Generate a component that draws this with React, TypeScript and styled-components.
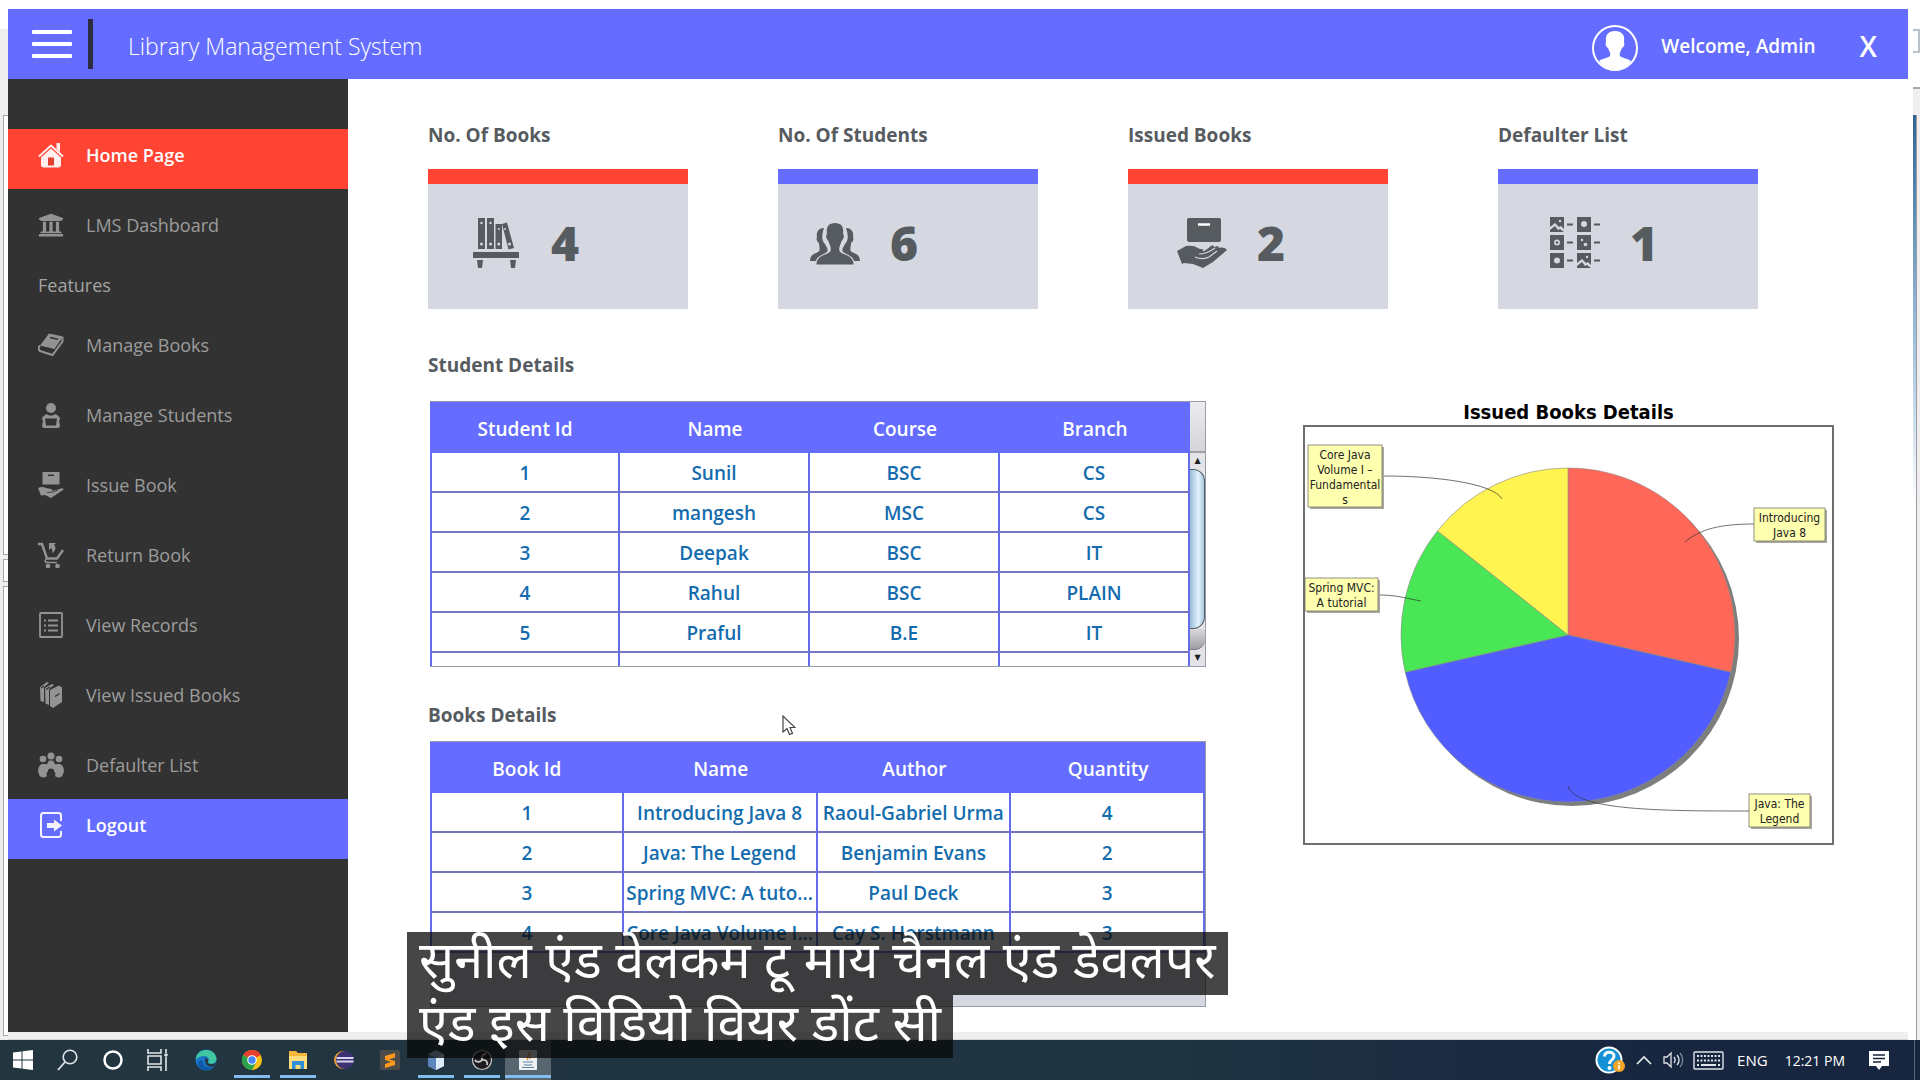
import React from "react";
import styled, { createGlobalStyle } from "styled-components";
import { FaUniversity } from "react-icons/fa";

const GlobalStyle = createGlobalStyle`
  * { box-sizing: border-box; }
  body { margin: 0; background: #fff; font-family: "Open Sans", "Noto Sans", sans-serif; }
  button { font: inherit; border: 0; background: none; padding: 0; color: inherit; cursor: pointer; }
  a { color: inherit; text-decoration: none; }
  h1, h2, p { margin: 0; }
  svg { display: block; }
`;

const blue = "#646dff";
const red = "#ff4433";
const ink = "#565b5f";

const Desktop = styled.div`
  position: relative;
  min-height: 100vh;
  display: flex;
  flex-direction: column;
  overflow: hidden;
`;
const Stage = styled.div`
  flex: 1;
  display: flex;
  padding-top: 9px;
  background: #fff;
`;
const LeftEdge = styled.div`
  width: 8px;
  display: flex;
  flex-direction: column;
  padding-top: 86px;
  background: #eeeeef;
  border-top: 20px solid #fff;
`;
const LeftPane = styled.div<{ $grow: number }>`
  flex: ${(p) => p.$grow};
  margin: 0 0 4px 3px;
  background: #fff;
  border: 1px solid #a5a5aa;
  border-right: 0;
`;
const RightEdge = styled.div`
  width: 12px;
  display: flex;
  flex-direction: column;
  padding: 20px 0 0 5px;
`;
const EdgeBox = styled.div`
  height: 24px;
  border: 2px solid #b9c3c9;
  border-left: 0;
`;
const EdgeBar = styled.div`
  height: 62px;
  background: linear-gradient(#fff 0 34px, #a9a9a9 34px 36px, #efefef 36px);
`;
const EdgeScroll = styled.div`
  flex: 1;
  border-right: 3px solid #efedee;
  background: linear-gradient(90deg, transparent 3px, #9d9da3 3px 4px, transparent 4px),
    linear-gradient(#2f6492, #8fb8d8 200px, #fff 390px);
`;
const Window = styled.div`
  flex: 1;
  min-width: 0;
  display: flex;
  flex-direction: column;
`;
const WindowFoot = styled.div`
  height: 8px;
  background: #efefef;
  border-bottom: 1px solid #d4d4d8;
`;

const Header = styled.header`
  height: 70px;
  display: flex;
  align-items: center;
  padding: 0 31px 0 24px;
  background: ${blue};
  color: #fff;
`;
const MenuButton = styled.button`
  width: 40px;
  height: 28px;
  display: flex;
  flex-direction: column;
  justify-content: space-between;
`;
const MenuLine = styled.span`
  height: 4px;
  width: 100%;
  border-radius: 1px;
  background: #fff;
`;
const Divider = styled.span`
  width: 5px;
  height: 50px;
  margin: 0 35px 0 16px;
  background: #2d2d40;
`;
const AppTitle = styled.h1`
  flex: 1;
  font-size: 23px;
  font-weight: 300;
  line-height: 32px;
  padding-top: 4px;
`;
const Avatar = styled.svg`
  margin-top: 8px;
`;
const Welcome = styled.span`
  margin: 0 44px 0 22px;
  font-size: 19px;
  font-weight: 600;
  line-height: 28px;
  padding-top: 4px;
`;
const CloseButton = styled.button`
  font-size: 28px;
  font-weight: 600;
  line-height: 32px;
  padding-top: 4px;
`;

const Body = styled.div`
  flex: 1;
  display: flex;
`;
const Sidebar = styled.nav`
  width: 340px;
  padding-top: 50px;
  background: #323232;
  display: flex;
  flex-direction: column;
`;
const NavItem = styled.a<{ $tone?: string; $gap?: boolean }>`
  height: 60px;
  display: flex;
  align-items: center;
  gap: 22px;
  padding: 0 30px 8px;
  margin-top: ${(p) => (p.$gap ? 10 : 0)}px;
  background: ${(p) => p.$tone ?? "transparent"};
  color: ${(p) => (p.$tone ? "#fff" : "#9c9c9c")};
  font-size: 18px;
  font-weight: ${(p) => (p.$tone ? 600 : 500)};
`;
const NavIcon = styled.span`
  width: 26px;
  height: 26px;
  opacity: 0.92;
`;
const NavHeading = styled.p`
  height: 60px;
  padding: 0 30px 8px;
  display: flex;
  align-items: center;
  color: #a3a3a3;
  font-size: 18px;
  font-weight: 500;
`;

const Main = styled.main`
  flex: 1;
  min-width: 0;
  padding: 44px 74px 25px 80px;
`;
const Stats = styled.section`
  display: flex;
  gap: 90px;
  margin-right: 76px;
`;
const Stat = styled.div`
  flex: 1;
  &:last-child { margin-left: 20px; }
`;
const SectionTitle = styled.h2`
  font-size: 19px;
  font-weight: 700;
  line-height: 24px;
  color: ${ink};
`;
const StatCard = styled.div<{ $tone: string; $indent: number }>`
  height: 140px;
  margin-top: 22px;
  border-top: 15px solid ${(p) => p.$tone};
  background: #d5d8e0;
  color: ${ink};
  display: flex;
  align-items: center;
  gap: 30px;
  padding-left: ${(p) => p.$indent}px;
  padding-bottom: 8px;
`;
const StatValue = styled.span`
  font-size: 48px;
  font-weight: 800;
  line-height: 56px;
`;

const Lower = styled.div`
  display: grid;
  grid-template-columns: 778fr 531fr;
  gap: 97px;
  margin-top: 44px;
`;
const TableBox = styled.div<{ $top: number }>`
  height: 266px;
  margin: ${(p) => p.$top}px 0 0 2px;
  border: 1px solid #9a9aa8;
  border-left: 0;
  background: #d5d8e0;
  overflow: hidden;
  display: flex;
  align-items: flex-start;
`;
const BookTitle = styled(SectionTitle)`
  margin-top: 36px;
`;
const TableView = styled.div`
  flex: 1;
  min-width: 0;
`;
const Table = styled.table`
  width: 100%;
  table-layout: fixed;
  border-collapse: separate;
  border-spacing: 0;
  text-align: center;
`;
const Th = styled.th`
  height: 51px;
  padding: 3px 0 0;
  background: ${blue};
  color: #fff;
  font-size: 19px;
  font-weight: 600;
`;
const Td = styled.td`
  height: 40px;
  padding: 2px 0 0;
  background: #fff;
  border-right: 2px solid #656cec;
  border-bottom: 2px solid #7476c4;
  color: #146cae;
  font-size: 19px;
  font-weight: 600;
  line-height: 28px;
  white-space: nowrap;
  overflow: hidden;
  &:first-child { border-left: 2px solid #656cec; }
`;
const ScrollTrack = styled.div`
  width: 15px;
  height: 100%;
  display: flex;
  flex-direction: column;
  background: #e4e4e8;
`;
const ScrollCorner = styled.span`
  height: 51px;
  border-bottom: 2px solid #a0a0a6;
  background: linear-gradient(#ececf0, #d5d5d9);
`;
const ScrollStep = styled.button`
  height: 16px;
  font-family: "DejaVu Sans", sans-serif;
  font-size: 8px;
  line-height: 16px;
  color: #222;
`;
const ScrollThumb = styled.span`
  height: 160px;
  border: 1px solid #4e5963;
  border-left: 0;
  border-radius: 0 12px 12px 0;
  background: linear-gradient(90deg, #98bcd8, #e2f2fc 60%, #a9c9e0);
`;
const ScrollRest = styled.span`
  flex: 1;
  border-bottom: 1px solid #77777c;
  border-radius: 0 0 10px 0;
  background: linear-gradient(#d9d9dd, #9d9da3);
`;

const ChartPanel = styled.section`
  padding-top: 46px;
`;
const ChartTitle = styled.h2`
  font-family: "DejaVu Sans Condensed", "DejaVu Sans", sans-serif;
  font-size: 20px;
  font-weight: 700;
  line-height: 26px;
  text-align: center;
  color: #000;
`;
const ChartFrame = styled.div`
  border: 2px solid #6e6e6e;
  background: #fff;
`;
const ChartText = styled.text`
  font-family: "DejaVu Sans Condensed", "DejaVu Sans", sans-serif;
  font-size: 12px;
  text-anchor: middle;
  fill: #222;
`;

const Captions = styled.div`
  position: absolute;
  left: 407px;
  bottom: 22px;
  display: flex;
  flex-direction: column;
  align-items: flex-start;
`;
const Caption = styled.p`
  height: 63px;
  padding: 0 12px;
  background: rgba(8, 8, 8, 0.75);
  color: #fff;
  font-family: "Noto Sans Devanagari", "Noto Sans", sans-serif;
  font-size: 52px;
  line-height: 66px;
  white-space: nowrap;
`;
const Pointer = styled.svg`
  position: absolute;
  left: 782px;
  top: 715px;
`;

const Taskbar = styled.footer`
  height: 40px;
  display: flex;
  justify-content: space-between;
  background: linear-gradient(90deg, #233640, #1f3441 60%, #182740 85%, #17263e);
  color: #fff;
`;
const TaskGroup = styled.div`
  display: flex;
`;
const TaskButton = styled.button<{ $system?: boolean }>`
  width: ${(p) => (p.$system ? 45 : 46)}px;
  height: 40px;
  display: flex;
  align-items: center;
  justify-content: center;
`;
const OpenTaskButton = styled(TaskButton)<{ $active?: boolean }>`
  background: linear-gradient(#83bdf0, #83bdf0) center 35px / ${(p) => (p.$active ? 46 : 36)}px 3px no-repeat
    ${(p) => (p.$active ? "#56656e" : "transparent")};
`;
const TaskApps = styled(TaskGroup)`
  margin-left: 3px;
`;
const Tray = styled.div`
  display: flex;
  align-items: center;
  padding-right: 5px;
  font-size: 15px;
`;
const TrayItem = styled.button<{ $before: number }>`
  margin-left: ${(p) => p.$before}px;
`;
const Clock = styled(TrayItem)`
  font-size: 14px;
`;
const ShowDesktop = styled.button`
  width: 1px;
  height: 40px;
  margin-left: 24px;
  background: #5b6a7c;
`;

type IconProps = { size?: number };
const Glyph = ({ size = 26, children }: IconProps & { children: React.ReactNode }) => (
  <svg width={size} height={size} viewBox="0 0 26 26" fill="currentColor" aria-hidden="true">
    {children}
  </svg>
);

const HomeIcon = () => (
  <Glyph>
    <path d="M1 14.500 13 3.500l12 11" fill="none" stroke="currentColor" strokeWidth="2" />
    <path d="M18.500 1h3.500v9l-3.500-3Z" />
    <path d="M13 6.500 3 15.500V23c0 1.500 1 2.500 2.500 2.500h15c1.500 0 2.500-1 2.500-2.500v-7.500Z" />
    <path d="M10 15.500h6v8h-6Z" fill="#e0402f" />
  </Glyph>
);
const BookIcon = () => (
  <Glyph>
    <path d="M11 1.500 25 4.500 16.500 17 2 13.500Z" />
    <path d="M2 13.500c-2 2-1.500 4.500 0 5.500L14.500 23 24.500 9.500V5" fill="none" stroke="currentColor" strokeWidth="2" />
    <path d="M12 5.500l8 1.700" stroke="#323232" strokeWidth="1.500" />
  </Glyph>
);
const StudentIcon = () => (
  <Glyph>
    <circle cx="13" cy="6" r="5" />
    <path d="M9 12c2 2 6 2 8 0 3 1 5 3 5 5l-1 2 1 5c0 1-1 2-2 2H6c-1 0-2-1-2-2l1-5-1-2c0-2 2-4 5-5Z" />
    <path d="M7 16.500h12l-1 7H8Z" fill="#323232" />
  </Glyph>
);
const HandBoxIcon = () => (
  <Glyph>
    <path d="M4.500 0h17v12.500h-17Z" />
    <path d="M10 3.300h6" stroke="#323232" strokeWidth="1.500" />
    <path d="M0 16c3-1.500 6-1.500 8 0l5 1c1 0 1.500 1 .5 1.700L18 18l5-1.500c2-.8 3 .5 2 1.500l-6 4-6 4-6-3-4 .5Z" />
    <path d="M9 20.500l6-.5 5-2" fill="none" stroke="#323232" strokeWidth=".8" />
  </Glyph>
);
const ReturnIcon = () => (
  <Glyph>
    <path d="M0 2h4l5 14.500h10L25 8" fill="none" stroke="currentColor" strokeWidth="2.500" />
    <path d="M8 17c-2 3 0 3.500 2 3.500h9" fill="none" stroke="currentColor" strokeWidth="1.500" />
    <circle cx="10" cy="24" r="2.300" />
    <circle cx="19.500" cy="24" r="2.300" />
    <path d="M11 1h7l-2 2c3 3 1 6-2 8.500 1-3 0-4-1-5.500L11 8Z" />
  </Glyph>
);
const RecordsIcon = () => (
  <Glyph>
    <rect x="2" y="1" width="22" height="24" rx="1" fill="none" stroke="currentColor" strokeWidth="1.800" />
    <path d="M6 8.500h2M10 8.500h10M6 13.500h2M10 13.500h10M6 18.500h2M10 18.500h10" stroke="currentColor" strokeWidth="1.800" />
  </Glyph>
);
const BooksIcon = () => (
  <Glyph>
    <path d="M2 5 9 0l2 1-5 4v15l-3.500-1Z" />
    <path d="M7 6l7-4 2 1-5 4v16l-3.500-1.500Z" />
    <path d="M12 8l9-4.500 3 2V20l-9 6-3-2Z" />
    <path d="M17 14.500l4.500-3M3 6l3-2M8 7.500l4-2.500" stroke="#323232" strokeWidth="1.200" />
  </Glyph>
);
const CrowdIcon = () => (
  <Glyph>
    <circle cx="5" cy="7" r="3.300" />
    <circle cx="13" cy="4" r="3.500" />
    <circle cx="21" cy="7" r="3.300" />
    <path d="M3 25c-4-3-4-11 1-13h3c1 0 1 1 2 0l2-3.500h4l2 3.500c1 1 1 0 2 0h3c5 2 5 10 1 13-3 1-5 0-6-1 1-3 0-4-1-4.500 1-4-7-4-6 0-1 .5-2 1.500-1 4.500-1 1-3 2-6 1Z" />
  </Glyph>
);
const LogoutIcon = () => (
  <Glyph>
    <path d="M23 9V3.500C23 2 22 1 20.500 1h-15C4 1 3 2 3 3.500v19C3 24 4 25 5.500 25h15c1.500 0 2.500-1 2.500-2.500V19" fill="none" stroke="currentColor" strokeWidth="2" />
    <path d="M9 11h7V7.500l8 6-8 6V16H9Z" />
  </Glyph>
);

const ShelfIcon = () => (
  <svg width="50" height="50" viewBox="0 0 50 50" fill={ink} aria-hidden="true">
    <path d="M7 -2h7v31H7ZM16 -2h7v31h-7ZM24.500 4H31v25h-6.500ZM31 4l5-1.500L43 28l-5.500 1.500Z" transform="translate(0 2)" />
    <path d="M2 34h46v6H2ZM6 42h6l-1 8H7ZM39 42h6l-1 8h-4Z" />
    <g fill="#d5d8e0">
      <circle cx="10.500" cy="5" r="1.200" /><circle cx="19.500" cy="5" r="1.200" />
      <circle cx="10.500" cy="26" r="1.500" /><circle cx="19.500" cy="26" r="1.500" />
      <circle cx="27.800" cy="11" r="1" /><circle cx="27.800" cy="26" r="1.500" />
      <circle cx="34" cy="11" r="1" /><circle cx="38.500" cy="26" r="1.500" />
    </g>
  </svg>
);
const PeopleIcon = () => (
  <svg width="50" height="50" viewBox="0 0 50 50" fill={ink} aria-hidden="true">
    <path d="M14 10c-6 0-8 5-7 9-1 2 0 5 2 6 0 4 2 7-1 9-4 2-8 3-8 9h6c1-5 7-6 11-9 2-3-1-5-2-8-4-4-3-10-1-16Z" />
    <path d="M36 10c6 0 8 5 7 9 1 2 0 5-2 6 0 4-2 7 1 9 4 2 8 3 8 9h-6c-1-5-7-6-11-9-2-3 1-5 2-8 4-4 3-10 1-16Z" />
    <path d="M25 5c-7 0-9 5-8 11-2 2 0 6 1.500 7 1 4 3 6 2 10-2 4-12 3-14 12v1.500h37V45c-2-9-12-8-14-12-1-4 1-6 2-10 1.500-1 3.500-5 1.500-7 1-6-1-11-8-11Z" />
  </svg>
);
const GiveIcon = () => (
  <svg width="50" height="50" viewBox="0 0 50 50" fill={ink} aria-hidden="true">
    <rect x="10" y="0" width="34" height="24" rx="2" />
    <path d="M21 6.500h12" stroke="#fff" strokeWidth="2.500" />
    <path d="M0 33l9-5c6-1 9 0 14 3 3 0 4 1 3 2l8-5c2-1 3 0 3 1l4-1 1 2c3-1 7 0 8 2L36 44 26 50l-10-4-9-1-2 1Z" />
    <path d="M18 39c5 2 10 2 14 0l8-6M22 36c5 0 8-1 13-4l3-2M26 33l6-4" fill="none" stroke="#d5d8e0" strokeWidth="1.200" />
  </svg>
);
const GridIcon = () => (
  <svg width="50" height="52" viewBox="0 0 50 52" fill={ink} aria-hidden="true">
    {[0, 18, 36].map((y) => [0, 27].map((x) => (
      <g key={`${x}-${y}`}>
        <rect x={x} y={y} width="14" height="15" />
        <rect x={x + 17} y={y + 6.500} width="6" height="2" />
      </g>
    )))}
    <g fill="#d5d8e0">
      <path d="M0 13v-3l5-4 4 4 2-1 3 3v3l-4-3-2 1-3-4ZM27 49v-3l5-4 4 4 2-1 3 3v3l-4-3-2 1-3-4Z" />
      <circle cx="10" cy="4" r="1.200" /><circle cx="37" cy="40" r="1.200" />
      <circle cx="34" cy="7" r="3" /><circle cx="7" cy="43.500" r="3" />
      <circle cx="7" cy="25.500" r="3" /><circle cx="32" cy="23" r="1.200" /><circle cx="35.500" cy="27.500" r="1.800" />
    </g>
    <circle cx="7" cy="25.500" r="1.300" />
  </svg>
);

const navItems = [
  { label: "Manage Books", icon: <BookIcon /> },
  { label: "Manage Students", icon: <StudentIcon /> },
  { label: "Issue Book", icon: <HandBoxIcon /> },
  { label: "Return Book", icon: <ReturnIcon /> },
  { label: "View Records", icon: <RecordsIcon /> },
  { label: "View Issued Books", icon: <BooksIcon /> },
  { label: "Defaulter List", icon: <CrowdIcon /> },
];
const stats = [
  { label: "No. Of Books", value: 4, tone: red, indent: 43, icon: <ShelfIcon /> },
  { label: "No. Of Students", value: 6, tone: blue, indent: 32, icon: <PeopleIcon /> },
  { label: "Issued Books", value: 2, tone: red, indent: 49, icon: <GiveIcon /> },
  { label: "Defaulter List", value: 1, tone: blue, indent: 52, icon: <GridIcon /> },
];
const students = [
  ["1", "Sunil", "BSC", "CS"],
  ["2", "mangesh", "MSC", "CS"],
  ["3", "Deepak", "BSC", "IT"],
  ["4", "Rahul", "BSC", "PLAIN"],
  ["5", "Praful", "B.E", "IT"],
  ["", "", "", ""],
];
const books = [
  ["1", "Introducing Java 8", "Raoul-Gabriel Urma", "4"],
  ["2", "Java: The Legend", "Benjamin Evans", "2"],
  ["3", "Spring MVC: A tuto...", "Paul Deck", "3"],
  ["4", "Core Java Volume I...", "Cay S. Horstmann", "3"],
];

const DataTable = ({ label, head, rows }: { label: string; head: string[]; rows: string[][] }) => (
  <TableView>
    <Table aria-label={label}>
      <thead>
        <tr>{head.map((h) => <Th key={h} scope="col">{h}</Th>)}</tr>
      </thead>
      <tbody>
        {rows.map((r, i) => (
          <tr key={i}>{r.map((c, j) => <Td key={j}>{c}</Td>)}</tr>
        ))}
      </tbody>
    </Table>
  </TableView>
);

const slices = [
  { share: 2, color: "#ff6759" },
  { share: 3, color: "#515dff" },
  { share: 1, color: "#49e755" },
  { share: 1, color: "#fff450" },
];
const notes = [
  { x: 3, y: 18, w: 74, h: 62, lines: ["Core Java", "Volume I –", "Fundamental", "s"] },
  { x: 449, y: 81, w: 71, h: 33, lines: ["Introducing", "Java 8"] },
  { x: 0, y: 151, w: 73, h: 33, lines: ["Spring MVC:", "A tutorial"] },
  { x: 444, y: 367, w: 61, h: 33, lines: ["Java: The", "Legend"] },
];
const CX = 263, CY = 208, R = 167;
const edge = (t: number) => `${CX + R * Math.sin(t * 2 * Math.PI)} ${CY - R * Math.cos(t * 2 * Math.PI)}`;

const Pie = () => {
  let at = 0;
  return (
    <svg viewBox="0 0 527 416" width="100%" role="img" aria-label="Issued Books Details pie chart">
      <circle cx={CX + 4} cy={CY + 4} r={R} fill="#7d7f7c" />
      {slices.map((s) => {
        const from = at / 7;
        at += s.share;
        return <path key={s.color} d={`M${CX} ${CY}L${edge(from)}A${R} ${R} 0 0 1 ${edge(at / 7)}Z`} fill={s.color} stroke="#8a8a8a" strokeWidth=".6" />;
      })}
      <g fill="none" stroke="#333" strokeWidth=".7">
        <path d="M79 49C130 49 188 56 197 72" />
        <path d="M450 97C415 97 395 102 380 115" />
        <path d="M75 168C92 168 104 172 116 174" />
        <path d="M263 359C270 384 360 384 445 384" />
      </g>
      {notes.map((n) => (
        <g key={n.lines[0]}>
          <rect x={n.x + 2} y={n.y + 2} width={n.w} height={n.h} fill="#a9a9a0" />
          <rect x={n.x} y={n.y} width={n.w} height={n.h} fill="#ffffb0" stroke="#77776a" strokeWidth=".8" />
          {n.lines.map((l, i) => (
            <ChartText key={l} x={n.x + n.w / 2} y={n.y + 14 + i * 15}>{l}</ChartText>
          ))}
        </g>
      ))}
    </svg>
  );
};

const Ic = ({ children, w = 24, h = 24 }: { children: React.ReactNode; w?: number; h?: number }) => (
  <svg width={w} height={h} viewBox={`0 0 ${w} ${h}`} fill="none" aria-hidden="true">{children}</svg>
);

export default function App() {
  return (
    <Desktop>
      <GlobalStyle />
      <Stage>
        <LeftEdge>
          <LeftPane $grow={430} />
          <LeftPane $grow={20} />
          <LeftPane $grow={440} />
        </LeftEdge>
        <Window>
          <Header>
            <MenuButton aria-label="Menu"><MenuLine /><MenuLine /><MenuLine /></MenuButton>
            <Divider />
            <AppTitle>Library Management System</AppTitle>
            <Avatar width="48" height="48" viewBox="0 0 48 48" aria-hidden="true">
              <circle cx="24" cy="24" r="22" fill="none" stroke="#fff" strokeWidth="2" />
              <path d="M24 7c-7 0-10 4-9 11-1 2 0 5 2 6 1 3 3 5 2 8-2 2-7 2-11 5 4 6 9 10 16 10s12-4 16-10c-4-3-9-3-11-5-1-3 1-5 2-8 2-1 3-4 2-6 1-7-2-11-9-11Z" fill="#fff" />
            </Avatar>
            <Welcome>Welcome, Admin</Welcome>
            <CloseButton aria-label="Close">X</CloseButton>
          </Header>
          <Body>
            <Sidebar>
              <NavItem href="#home" $tone={red}><NavIcon><HomeIcon /></NavIcon>Home Page</NavItem>
              <NavItem href="#dashboard" $gap><NavIcon><FaUniversity size={26} /></NavIcon>LMS Dashboard</NavItem>
              <NavHeading>Features</NavHeading>
              {navItems.map((n, i) => (
                <NavItem key={n.label} href="#" $gap={i > 0}><NavIcon>{n.icon}</NavIcon>{n.label}</NavItem>
              ))}
              <NavItem href="#logout" $tone={blue}><NavIcon><LogoutIcon /></NavIcon>Logout</NavItem>
            </Sidebar>
            <Main>
              <Stats>
                {stats.map((s) => (
                  <Stat key={s.label}>
                    <SectionTitle>{s.label}</SectionTitle>
                    <StatCard $tone={s.tone} $indent={s.indent}>
                      {s.icon}
                      <StatValue>{s.value}</StatValue>
                    </StatCard>
                  </Stat>
                ))}
              </Stats>
              <Lower>
                <div>
                  <SectionTitle>Student Details</SectionTitle>
                  <TableBox $top={24}>
                    <DataTable label="Student Details" head={["Student Id", "Name", "Course", "Branch"]} rows={students} />
                    <ScrollTrack>
                      <ScrollCorner />
                      <ScrollStep aria-label="Scroll up">▲</ScrollStep>
                      <ScrollThumb />
                      <ScrollRest />
                      <ScrollStep aria-label="Scroll down">▼</ScrollStep>
                    </ScrollTrack>
                  </TableBox>
                  <BookTitle>Books Details</BookTitle>
                  <TableBox $top={14}>
                    <DataTable label="Books Details" head={["Book Id", "Name", "Author", "Quantity"]} rows={books} />
                  </TableBox>
                </div>
                <ChartPanel>
                  <ChartTitle>Issued Books Details</ChartTitle>
                  <ChartFrame><Pie /></ChartFrame>
                </ChartPanel>
              </Lower>
            </Main>
          </Body>
          <WindowFoot />
        </Window>
        <RightEdge><EdgeBox /><EdgeBar /><EdgeScroll /></RightEdge>
      </Stage>

      <Taskbar>
        <TaskGroup>
          <TaskButton $system aria-label="Start">
            <Ic><path d="M2 4.500 10.500 3.500V11.500H2ZM11.500 3.300 22 2V11.500H11.500ZM2 12.500h8.500v8L2 19.500ZM11.500 12.500H22V22l-10.500-1.300Z" fill="#fff" /></Ic>
          </TaskButton>
          <TaskButton $system aria-label="Search">
            <Ic><circle cx="14" cy="9" r="6.800" stroke="#dfe5e8" strokeWidth="1.600" /><path d="M9 14 2 22" stroke="#dfe5e8" strokeWidth="1.800" /></Ic>
          </TaskButton>
          <TaskButton $system aria-label="Cortana">
            <Ic><circle cx="12" cy="12" r="8.500" stroke="#fff" strokeWidth="2.500" /></Ic>
          </TaskButton>
          <TaskButton $system aria-label="Task view">
            <Ic><path d="M2 1v4h13V1M2 23v-4h13v4M2 8h13v8H2ZM20 1v4M20 9v14" stroke="#dfe5e8" strokeWidth="1.600" /><circle cx="20" cy="7" r="1.800" fill="#dfe5e8" /></Ic>
          </TaskButton>
          <TaskApps>
            <TaskButton aria-label="Edge">
              <Ic><circle cx="12" cy="12" r="10.500" fill="#1876c9" /><path d="M2 9C5 0 20-1 22.500 10c.5 5-5 7-9 5 3-3 1-7-3-7-4 0-7 1-8.500 4Z" fill="#3fc6a0" /><path d="M9 12c-1 5 3 9 10 7-4 4-11 4-14 0-2-4 0-7 4-7Z" fill="#1058a5" /><path d="M11 10c3 0 4 3 2.500 5 3 2 7 1 9-1l-2 4c-5 2-10 0-9.500-8Z" fill="#233640" /></Ic>
            </TaskButton>
            <OpenTaskButton aria-label="Chrome">
              <Ic><circle cx="12" cy="12" r="10" fill="#fbc116" /><path d="M12 12 3.300 7A10 10 0 0 1 20.700 7Z" fill="#e8402f" /><path d="M12 12 3.300 7A10 10 0 0 0 12 22l4.500-8Z" fill="#2ca24c" /><circle cx="12" cy="12" r="4.800" fill="#fff" /><circle cx="12" cy="12" r="3.700" fill="#4285f4" /></Ic>
            </OpenTaskButton>
            <OpenTaskButton aria-label="File Explorer">
              <Ic><path d="M3 3h7l2 2h9v16H3Z" fill="#f3b73b" /><path d="M3 8h18v13H3Z" fill="#ffdc7c" /><path d="M6 13h12v8h-3.500v-4h-5v4H6Z" fill="#2f8fd8" /></Ic>
            </OpenTaskButton>
            <TaskButton aria-label="Eclipse">
              <Ic><circle cx="11" cy="12" r="9" fill="#e99a37" /><circle cx="13" cy="12" r="9" fill="#3b3173" /><path d="M4.500 10h17M4.500 13.500h17" stroke="#d8d6ee" strokeWidth="1.800" /></Ic>
            </TaskButton>
            <TaskButton aria-label="Sublime Text">
              <Ic><rect x="2" y="2" width="20" height="20" rx="2" fill="#4b4b4b" /><path d="M17 5v4.500L11 11.500l6 1.500v4L7 20v-4l6-2-6-2V8Z" fill="#ff9a1a" /></Ic>
            </TaskButton>
            <OpenTaskButton aria-label="NetBeans">
              <Ic><path d="m12 2 8 4v12l-8 4-8-4V6Z" fill="#a9c9ef" /><path d="M12 10v12l8-4V6Z" fill="#dcebfa" /><path d="M12 10v12l-8-4V6Z" fill="#5c86bd" /></Ic>
            </OpenTaskButton>
            <OpenTaskButton aria-label="OBS Studio">
              <Ic><circle cx="12" cy="12" r="9.500" fill="#1e1a1f" stroke="#c9c9c9" strokeWidth="1.200" /><path d="M12 12c-1-4 1-6 4-6M12 12c4-1 6 2 5 5M12 12c-2 3-6 2-7 0" stroke="#c9c9c9" strokeWidth="1.800" /></Ic>
            </OpenTaskButton>
            <OpenTaskButton $active aria-label="Java application">
              <Ic><rect x="3" y="2" width="18" height="20" rx="1" fill="#eef0f2" /><path d="M12 4c3 3-3 4 0 8M14 7c2 1-1 2 0 4" stroke="#e58a3a" strokeWidth="1.300" /><path d="M7 14h10M8 17h8M6 19.500h12" stroke="#5a88b0" strokeWidth="1.200" /></Ic>
            </OpenTaskButton>
          </TaskApps>
        </TaskGroup>
        <Tray>
          <TrayItem $before={0} aria-label="Help">
            <Ic w={30} h={28}><circle cx="14" cy="14" r="12.500" fill="#1592d6" stroke="#fff" strokeWidth="2" /><path d="M9.500 10.500c0-6 9.500-5.500 9.500-.5 0 4-4.500 4-4.500 8" stroke="#fff" strokeWidth="3" /><circle cx="14.500" cy="22" r="2" fill="#fff" /><circle cx="24" cy="20" r="6" fill="#f5a623" /><path d="M24 16.500v1.500M24 19v4.500" stroke="#fff" strokeWidth="1.600" /></Ic>
          </TrayItem>
          <TrayItem $before={11} aria-label="Show hidden icons">
            <Ic w={16} h={16}><path d="m1 12 7-7 7 7" stroke="#e8ecf0" strokeWidth="1.600" /></Ic>
          </TrayItem>
          <TrayItem $before={11} aria-label="Volume">
            <Ic w={21} h={18}><path d="M1 6h3l4-4v14l-4-4H1Z" stroke="#dfe5ea" strokeWidth="1.300" /><path d="M11 6c1.500 2 1.500 4 0 6M14 4c2.500 3 2.500 7 0 10" stroke="#dfe5ea" strokeWidth="1.300" /><path d="M17 2c3.500 4 3.500 10 0 14" stroke="#7f8b99" strokeWidth="1.300" /></Ic>
          </TrayItem>
          <TrayItem $before={9} aria-label="Touch keyboard">
            <Ic w={31} h={19}><rect x="1" y="1" width="29" height="17" rx="1" stroke="#dfe5ea" strokeWidth="1.400" /><path d="M4 5h23M4 9.500h23" stroke="#dfe5ea" strokeWidth="2" strokeDasharray="2 1.500" /><path d="M4 14h2M8 14h15M25 14h2" stroke="#dfe5ea" strokeWidth="1.800" /></Ic>
          </TrayItem>
          <TrayItem $before={13}>ENG</TrayItem>
          <Clock $before={17}>12:21 PM</Clock>
          <TrayItem $before={23} aria-label="Notifications">
            <Ic w={22} h={20}><path d="M1 1h20v15h-7l-3 4-3-4H1Z" fill="#fff" /><path d="M5 5h12M5 8.500h12M5 12h8" stroke="#17263e" strokeWidth="1.300" /></Ic>
          </TrayItem>
          <ShowDesktop aria-label="Show desktop" />
        </Tray>
      </Taskbar>

      <Pointer width="14" height="22" viewBox="0 0 14 22" aria-hidden="true">
        <path d="M1 1v16l4-3.500 2.500 6 3-1.200L8 12.500h5Z" fill="#fff" stroke="#444" strokeWidth="1.200" />
      </Pointer>
      <Captions>
        <Caption>सुनील एंड वेलकम टू माय चैनल एंड डेवलपर</Caption>
        <Caption>एंड इस विडियो वियर डोंट सी</Caption>
      </Captions>
    </Desktop>
  );
}
